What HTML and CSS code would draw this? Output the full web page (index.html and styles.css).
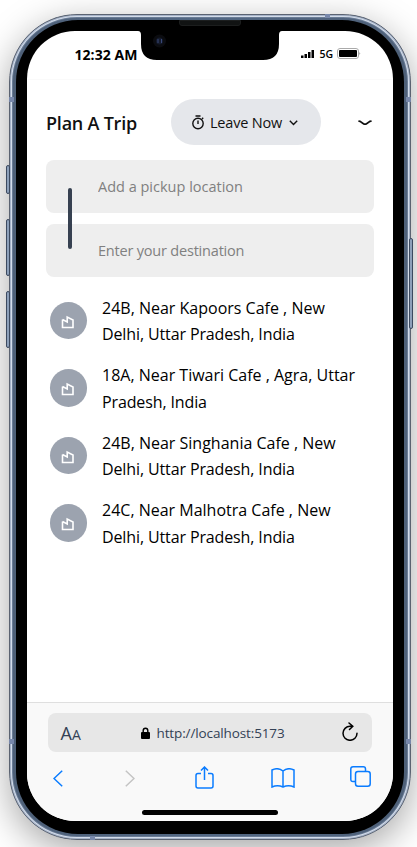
FILE: index.html
```html
<!DOCTYPE html>
<html lang="en">
<head>
<meta charset="utf-8">
<title>Plan A Trip</title>
<link rel="stylesheet" href="styles.css">
</head>
<body>
<div class="phone">
  <i class="key mute"></i><i class="key up"></i><i class="key down"></i><i class="key power"></i>
  <i class="band left high"></i><i class="band right high"></i><i class="band left low"></i><i class="band right low"></i>
  <i class="band top"></i><i class="band bottom"></i>
  <div class="bezel">
    <i class="speaker"></i>
    <div class="screen">
      <div class="status">
        <span class="time">12:32 AM</span>
        <svg class="notch" width="144" height="30" viewBox="0 0 144 30"><path d="M0 0Q3 0 3 4V13Q3 29 19 29H125Q141 29 141 13V4Q141 0 144 0Z"/><circle cx="21.500" cy="10" r="6.500" fill="#0b0c10"/><circle cx="21.500" cy="10" r="3.500" fill="#141a2b"/><path d="M20 8v4M23.500 8v4" stroke="#394878"/></svg>
        <div class="signals">
          <svg width="13" height="8" viewBox="0 0 13 8"><path d="M0 5.500h2.500V8H0zM3.500 4H6v4H3.500zM7 2h2.500v6H7zM10.500 0H13v8h-2.500z"/></svg>
          <span class="network">5G</span>
          <svg width="24" height="12" viewBox="0 0 24 12"><rect x=".5" y=".5" width="21" height="10" rx="2.500" fill="#fff" stroke="#aaa"/><rect x="2" y="2" width="18" height="7" rx="1"/><path d="M22.500 4q1.500 1.500 0 3z" fill="#777"/></svg>
        </div>
      </div>
      <main>
        <header>
          <h1>Plan A Trip</h1>
          <button class="leave">
            <svg width="14" height="15" viewBox="0 0 14 15" fill="none" stroke="#111" stroke-width="1.400"><circle cx="7" cy="8.500" r="5.200"/><path d="M4.500 1h5M7 5.500V9M11 4l1.200-1.200"/></svg>
            <span>Leave Now</span>
            <svg class="caret" width="9" height="6" viewBox="0 0 9 6" fill="none" stroke="#111" stroke-width="1.400"><path d="M.8.8 4.500 4.500 8.200.8"/></svg>
          </button>
          <svg class="collapse" width="14" height="6" viewBox="0 0 14 6" fill="none" stroke="#111" stroke-width="1.700"><path d="M.4 1 2 1.400 5.800 3.900Q7 4.500 8.200 3.900L12 1.400 13.600 1"/></svg>
        </header>
        <div class="fields">
          <i class="route"></i>
          <input type="text" class="pickup" placeholder="Add a pickup location">
          <input type="text" class="drop" placeholder="Enter your destination">
        </div>
        <ul>
          <li><span class="pin"><svg width="14" height="14" viewBox="0 0 14 14"><path d="M1.500 4.500v8h10.500v-7.500L6.200 2v5L1.500 4.500"/></svg></span><p>24B, Near Kapoors Cafe , New<br><span class="city">Delhi, Uttar Pradesh, India</span></p></li>
          <li><span class="pin"><svg width="14" height="14" viewBox="0 0 14 14"><path d="M1.500 4.500v8h10.500v-7.500L6.200 2v5L1.500 4.500"/></svg></span><p>18A, Near Tiwari Cafe , Agra, Uttar<br><span class="city">Pradesh, India</span></p></li>
          <li><span class="pin"><svg width="14" height="14" viewBox="0 0 14 14"><path d="M1.500 4.500v8h10.500v-7.500L6.200 2v5L1.500 4.500"/></svg></span><p>24B, Near Singhania Cafe , New<br><span class="city">Delhi, Uttar Pradesh, India</span></p></li>
          <li><span class="pin"><svg width="14" height="14" viewBox="0 0 14 14"><path d="M1.500 4.500v8h10.500v-7.500L6.200 2v5L1.500 4.500"/></svg></span><p>24C, Near Malhotra Cafe , New<br><span class="city">Delhi, Uttar Pradesh, India</span></p></li>
        </ul>
      </main>
      <footer>
        <div class="address">
          <span class="aa">A<small>A</small></span>
          <span class="url"><svg width="9" height="12" viewBox="0 0 9 12"><path d="M2.200 6V3.500a2.300 2.300 0 0 1 4.600 0V6" fill="none" stroke="#000" stroke-width="1.400"/><rect y="5" width="9" height="7" rx="1"/></svg><span>http://localhost:5173</span></span>
          <svg class="reload" width="16" height="19" viewBox="0 0 16 19" fill="none" stroke="#000" stroke-width="1.500" stroke-linecap="round"><path d="M10 4.300H8A7 7 0 1 0 15 11.300M7 1l3.800 3.300L7.500 7.500"/></svg>
        </div>
        <nav>
          <svg width="10" height="17" viewBox="0 0 10 17"><path d="M9.200.8 1 8.500l8.200 7.700"/></svg>
          <svg class="off" width="10" height="17" viewBox="0 0 10 17"><path d="M.8.8 9 8.500.8 16.200"/></svg>
          <svg class="share" width="20" height="23" viewBox="0 0 20 23"><path d="M6 7.500H3q-2 0-2 2V20q0 2 2 2h13q2 0 2-2V9.500q0-2-2-2h-3M9.500 14V1M6 4.500 9.500 1 13 4.500"/></svg>
          <svg class="book" width="24" height="20" viewBox="0 0 24 20"><path d="M12 3Q7-1 1 2v17q5.500-2.500 11 0 5.500-2.500 11 0V2Q17-1 12 3V19"/></svg>
          <svg class="tabs" width="21" height="21" viewBox="0 0 21 21"><rect x="5.500" y="5.500" width="14.700" height="14.700" rx="2.500"/><path d="M5.500 15.500H3q-2.200 0-2.200-2.200V3Q.8.800 3 .8h10.300q2.200 0 2.200 2.200v2.500"/></svg>
        </nav>
        <i class="home"></i>
      </footer>
    </div>
  </div>
</div>
</body>
</html>
```
FILE: styles.css
```css
* { box-sizing: border-box; }
body {
  margin: 0; height: 847px; padding: 14px 0 0 9px; overflow: hidden;
  background: #fff; color: #000; font-family: "Open Sans", "Noto Sans", sans-serif;
}
h1, p, ul { margin: 0; padding: 0; font-weight: 400; }
svg { display: block; flex: none; }

.phone {
  position: relative; width: 402px; height: 826px; padding: 5px 6px; border-radius: 68px;
  background: linear-gradient(90deg, #4e6078, #526783 50%, #4e6078);
  border: 1px solid #5b6371;
  box-shadow: inset 0 0 0 1px #a5b2c8, inset 0 0 0 2px #d3dce9, inset 0 0 0 3px #6a7c96, 0 10px 36px 0 #00000058;
}
.bezel { position: relative; height: 814px; padding: 11px; background: #000; border-radius: 62px; }
.screen {
  position: relative; height: 790px; width: 366px; overflow: hidden;
  display: flex; flex-direction: column; background: #fff; border-radius: 48px;
}
.key { position: absolute; width: 4px; border: 1px solid #3c4a60; background: #8da0ba; border-radius: 2px; }
.mute { left: -4px; top: 150px; height: 29px; }
.up { left: -4px; top: 204px; height: 57px; }
.down { left: -4px; top: 276px; height: 57px; }
.power { right: -3px; top: 223px; height: 91px; }
.band { position: absolute; width: 5px; height: 5px; background: #7888ab; }
.left { left: -1px; }
.right { right: -1px; }
.high { top: 82px; }
.low { top: 724px; }
.top { right: 80px; top: -1px; height: 4px; }
.bottom { left: 80px; bottom: -1px; height: 4px; }
.speaker { position: absolute; left: 163px; top: 0; width: 62px; height: 6px; background: #111313; border: 1px solid #1c1e1e; border-radius: 0 0 3px 3px; }

.status { position: relative; height: 49px; display: flex; justify-content: space-between; padding: 0 32px 0 47.500px; border-bottom: 1px solid #fafafa; }
.time { padding-top: 14px; font-size: 14px; font-weight: 700; line-height: 20px; letter-spacing: .05px; white-space: nowrap; }
.notch { position: absolute; left: 111px; top: 0; }
.signals { display: flex; height: 12px; margin-top: 17px; align-items: center; }
.network { margin: 0 4px 0 5px; font-size: 10.500px; font-weight: 600; line-height: 12px; }

main { flex: 1; padding: 19px 19px 0; }
header { display: flex; align-items: center; height: 46px; }
h1 { width: 125px; padding-top: 2px; font-size: 18px; font-weight: 600; letter-spacing: -.22px; white-space: nowrap; color: #111; }
.leave {
  display: flex; align-items: center; width: 150px; height: 46px; padding: 0 0 0 20px;
  border: 0; border-radius: 23px; background: #e5e7eb; font: 14.500px "Open Sans", sans-serif; color: #111; white-space: nowrap;
}
.leave span { width: 84px; padding-left: 5px; text-align: left; letter-spacing: -.2px; }
.caret { margin-top: 1px; }
.collapse { margin-left: 37px; margin-top: 1px; }
.fields { position: relative; display: grid; gap: 11.500px; margin-top: 15px; }
input {
  width: 328px; height: 52.500px; padding: 0 0 0 52px; border: 0; border-radius: 8px;
  background: #eee; font: 14.500px "Open Sans", sans-serif;
}
.drop { letter-spacing: -.2px; }
input::placeholder { color: #808080; opacity: 1; }
.route { position: absolute; left: 22px; top: 27.500px; width: 4px; height: 61.500px; border-radius: 2px; background: #374151; }
ul { margin-top: 18px; list-style: none; }
li { display: flex; align-items: center; gap: 15px; height: 53px; margin-bottom: 14.500px; padding-left: 3.500px; }
.pin { display: grid; place-items: center; width: 37.500px; height: 37.500px; margin-top: -1px; border-radius: 50%; background: #9ca3af; }
.pin svg { fill: none; stroke: #fff; stroke-width: 1.600; margin-top: 2px; }
li p { font-size: 16px; line-height: 26.400px; white-space: nowrap; }
.city { letter-spacing: -.12px; }

footer { height: 119px; padding: 10px 21px 0; background: #f9f9f9; border-top: 1px solid #dfdfdf; }
.address { display: flex; align-items: center; height: 39px; padding: 0 14px 0 12.500px; background: #e7e7e7; border-radius: 8px; color: #334155; }
.aa { width: 80px; font-size: 18px; }
.aa small { font-size: 14px; }
.url { display: flex; gap: 7px; align-items: center; font-size: 13.500px; letter-spacing: -.12px; }
.reload { margin-left: auto; margin-top: -2px; }
nav { display: flex; align-items: center; height: 52px; padding: 0 2px 0 5px; fill: none; stroke: #0a7cff; stroke-width: 1.500; }
.off { margin-left: 62px; stroke: #c4c4c4; }
.share { margin-left: 60px; margin-top: -2px; }
.book { margin-left: 56px; }
.tabs { margin-left: 55px; margin-top: -3px; }
.home { display: block; width: 136px; height: 5px; margin: 6px auto 0 94px; border-radius: 3px; background: #000; }
```
